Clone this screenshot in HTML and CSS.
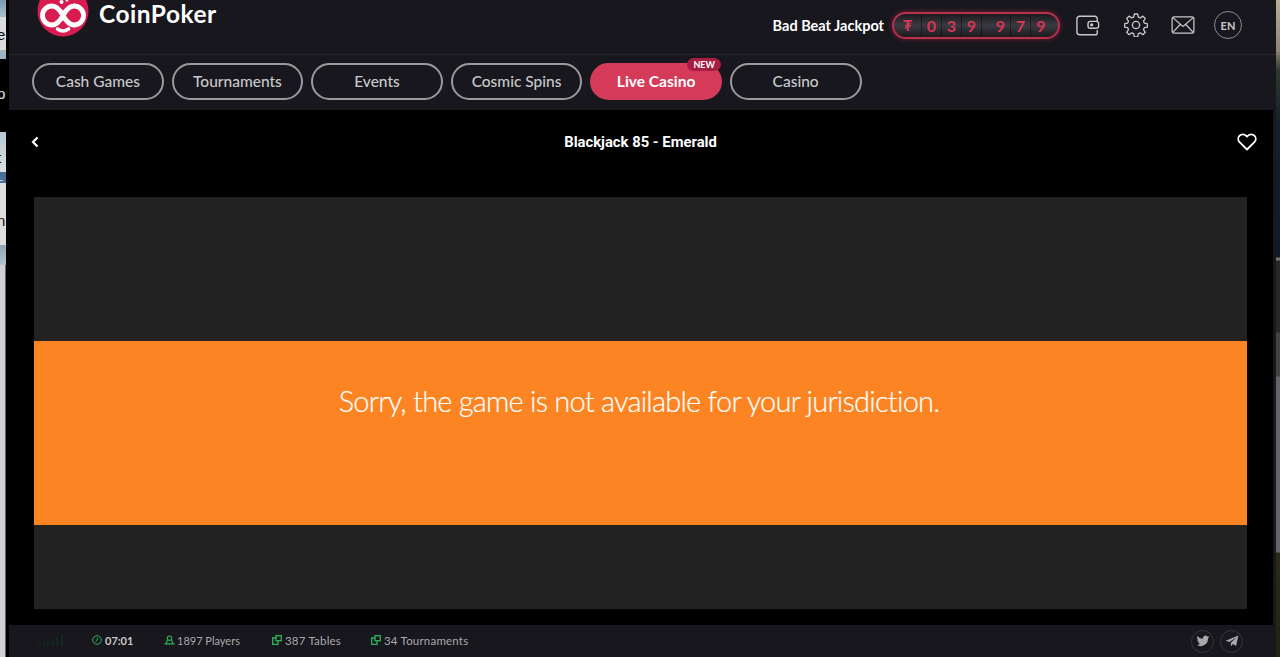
FILE: index.html
```html
<!DOCTYPE html>
<html lang="en">
<head>
    <meta charset="UTF-8">
    <meta name="viewport" content="width=device-width, initial-scale=1.0">
    <title>CoinPoker - Blackjack 85 - Emerald</title>
    <link rel="stylesheet" href="styles.css">
</head>
<body>
    <div class="desk desk-left">
        <div class="desk-tile t1"></div>
        <div class="desk-tile t2">e</div>
        <div class="desk-tile t3"></div>
        <div class="desk-black">p</div>
        <div class="desk-tile t4">t</div>
        <div class="desk-tile t5">L</div>
        <div class="desk-tile t6">n</div>
        <div class="desk-tile t7"></div>
        <div class="desk-tile grow"></div>
    </div>

    <div class="app">
        <header class="topbar">
            <div class="brand">
                <svg class="logo" viewBox="0 0 52 52">
                    <circle cx="26" cy="26" r="25.500" fill="#d81b50"/>
                    <path d="M26 30.500c-3-5.500-6-9.500-11-9.500a9.500 9.500 0 0 0 0 19c5 0 8-4 11-9.500s6-9.500 11-9.500a9.500 9.500 0 0 1 0 19c-5 0-8-4-11-9.500" fill="none" stroke="#fff" stroke-width="4.800"/>
                    <circle cx="24.500" cy="17" r="2" fill="#fff"/>
                    <circle cx="30" cy="15" r="1.500" fill="#fff"/>
                    <path d="M20.500 44c3.500 2.500 7.500 2.500 11 0" fill="none" stroke="#fff" stroke-width="3.600" stroke-linecap="round"/>
                </svg>
                <span class="brand-name">CoinPoker</span>
            </div>
            <div class="top-right">
                <span class="jackpot-label">Bad Beat Jackpot</span>
                <div class="jackpot">
                    <span class="digit cur">₮</span>
                    <span class="digit">0</span>
                    <span class="digit">3</span>
                    <span class="digit">9</span>
                    <span class="digit gap">9</span>
                    <span class="digit">7</span>
                    <span class="digit">9</span>
                </div>
                <svg class="top-icon wallet" viewBox="0 0 26 22" fill="none" stroke="#c9c9cc" stroke-width="1.500">
                    <path d="M23 6V3.500A2.500 2.500 0 0 0 20.500 1H4a3 3 0 0 0-3 3v14a3 3 0 0 0 3 3h17a2 2 0 0 0 2-2v-3"/>
                    <rect x="13" y="6.500" width="11.500" height="7.500" rx="2.500"/>
                    <circle cx="17" cy="10.200" r="1" fill="#c9c9cc"/>
                </svg>
                <svg class="top-icon gear" viewBox="0 0 24 24" fill="none" stroke="#c9c9cc" stroke-width="1.300" stroke-linejoin="round">
                    <circle cx="12" cy="12" r="3.600"/>
                    <path d="M10.300 1h3.400l.6 3.100 2 .8 2.600-1.800 2.400 2.400-1.800 2.600.8 2 3.100.6v3.400l-3.100.6-.8 2 1.800 2.600-2.400 2.400-2.600-1.800-2 .8-.6 3.100h-3.400l-.6-3.100-2-.8-2.600 1.800-2.400-2.400 1.800-2.600-.8-2-3.100-.6v-3.400l3.100-.6.8-2-1.800-2.600 2.400-2.400 2.600 1.800 2-.8z"/>
                </svg>
                <svg class="top-icon mail" viewBox="0 0 25 19" fill="none" stroke="#c9c9cc" stroke-width="1.300">
                    <rect x="1" y="1" width="23" height="17" rx="2"/>
                    <path d="M2 2l10.500 9L23 2M2 17l7.500-8M23 17l-7.500-8"/>
                </svg>
                <span class="lang">EN</span>
            </div>
        </header>

        <nav class="tabs">
            <a class="tab">Cash Games</a>
            <a class="tab">Tournaments</a>
            <a class="tab">Events</a>
            <a class="tab">Cosmic Spins</a>
            <a class="tab active">Live Casino<span class="badge">NEW</span></a>
            <a class="tab">Casino</a>
        </nav>

        <main class="game">
            <div class="game-head">
                <svg class="back" viewBox="0 0 8 12" fill="none" stroke="#fff" stroke-width="2.200"><path d="M6.500 1.500L2 6l4.500 4.500"/></svg>
                <h1>Blackjack 85 - Emerald</h1>
                <svg class="heart" viewBox="0 0 20 18" fill="none" stroke="#fff" stroke-width="1.800" stroke-linejoin="round">
                    <path d="M10 16.500L2.600 9.200a4.600 4.600 0 0 1 0-6.500 4.500 4.500 0 0 1 6.400 0l1 1 1-1a4.500 4.500 0 0 1 6.400 0 4.600 4.600 0 0 1 0 6.500z"/>
                </svg>
            </div>
            <div class="game-panel">
                <div class="notice">Sorry, the game is not available for your jurisdiction.</div>
            </div>
        </main>

        <footer class="statusbar">
            <div class="signal"><i></i><i></i><i></i><i></i><i></i><i></i></div>
            <div class="stat clock">
                <svg viewBox="0 0 10 10" fill="none" stroke="#2fb35c" stroke-width="1"><circle cx="5" cy="5" r="4.300"/><path d="M5.300 2.500v2.700L3.500 6.800"/></svg>
                <b>07:01</b>
            </div>
            <div class="stat players">
                <svg viewBox="0 0 12 10" fill="none" stroke="#2fb35c" stroke-width="1.200"><circle cx="6" cy="3" r="2.400"/><path d="M3.700 5L2.500 8.500M8.300 5l1.200 3.500M.5 9.200h11"/></svg>
                1897 Players
            </div>
            <div class="stat tables">
                <svg viewBox="0 0 10 10" fill="none" stroke="#2fb35c" stroke-width="1.300"><rect x="4" y=".7" width="5.300" height="5"/><path d="M4 3H.7v6.300h5.300V5.700"/></svg>
                387 Tables
            </div>
            <div class="stat tourneys">
                <svg viewBox="0 0 10 10" fill="none" stroke="#2fb35c" stroke-width="1.300"><rect x="4" y=".7" width="5.300" height="5"/><path d="M4 3H.7v6.300h5.300V5.700"/></svg>
                34 Tournaments
            </div>
            <div class="social">
                <span class="social-btn">
                    <svg viewBox="0 0 24 24" fill="#a8a8ab"><path d="M23 4.900c-.8.400-1.700.600-2.600.700.900-.600 1.600-1.400 2-2.500-.9.500-1.800.900-2.900 1.100a4.500 4.500 0 0 0-7.700 4.100C8 8.100 4.700 6.300 2.500 3.600c-1.200 2.100-.6 4.700 1.400 6-.7 0-1.400-.2-2-.6 0 2.200 1.500 4.100 3.600 4.500-.7.200-1.400.2-2 .1.600 1.800 2.200 3.100 4.200 3.100A9 9 0 0 1 1 18.600 12.800 12.800 0 0 0 20.700 7.200c.9-.6 1.700-1.400 2.300-2.300z"/></svg>
                </span>
                <span class="social-btn">
                    <svg viewBox="0 0 24 24" fill="#a8a8ab"><path d="M23 2.500L1 11.500l6.500 2.400L20 5.500 10 15v6l3.600-4 5.400 3.500z"/></svg>
                </span>
            </div>
        </footer>
    </div>

    <div class="desk desk-right"></div>
</body>
</html>
```

FILE: styles.css
```css
html, body {
    height: 100%;
}
body {
    margin: 0;
    display: flex;
    height: 657px;
    overflow: hidden;
    font-family: 'Lato', 'Open Sans', sans-serif;
    background: #000;
    color: #fff;
}

/* bits of the desktop showing either side of the window */
.desk {
    flex: none;
    display: flex;
    flex-direction: column;
    overflow: hidden;
}
.desk-left {
    width: 9px;
    background: #000;
    font-family: 'Liberation Sans', sans-serif;
    font-size: 15px;
    color: #111;
}
.desk-right {
    width: 4px;
    background: linear-gradient(180deg,
        #b9ad97 0, #8d8574 50px, #2f3a2c 70px, #14212c 120px, #0e1a28 257px,
        #77746c 258px, #77746c 260px, #2b2823 261px, #2b2823 332px,
        #45423f 333px, #45423f 376px, #66656a 377px, #66656a 552px,
        #2c2a12 553px, #24230f 657px);
}
.desk-tile {
    width: 6px;
    box-sizing: border-box;
    overflow: hidden;
    text-indent: -3px;
    line-height: 1;
    background: linear-gradient(180deg, #bfd0dc, #dfe4e8);
}
.t1 { height: 17px; background: linear-gradient(180deg, #7b99b0, #a9bfce); }
.t2 { height: 33px; background: #d9dcdc; padding-top: 10px; }
.t3 { height: 9px; background: #9fb2c0; }
.desk-black {
    width: 6px;
    height: 73px;
    box-sizing: border-box;
    overflow: hidden;
    color: #eee;
    text-indent: -3px;
    padding-top: 27px;
    line-height: 1;
    background: #000;
}
.t4 { height: 40px; background: linear-gradient(180deg, #b6c7d3, #dde0e2); padding-top: 18px; }
.t5 { height: 11px; background: #4a6d9a; color: #dfe7ef; font-size: 11px; }
.t6 { height: 62px; background: #dedede; padding-top: 30px; }
.t7 { height: 20px; background: linear-gradient(180deg, #8fa5b4, #b4c4cf); }
.grow {
    flex: 1;
    background: #d0d0d8;
    border-right: 1px solid #666;
}

.app {
    flex: 1;
    min-width: 0;
    display: flex;
    flex-direction: column;
    background: #17171d;
}

.topbar {
    height: 55px;
    flex: none;
    box-sizing: border-box;
    display: flex;
    align-items: center;
    justify-content: space-between;
    border-bottom: 1px solid #26262c;
    padding: 0 34px 4px 28px;
    overflow: hidden;
}
.brand {
    display: flex;
    align-items: flex-start;
    gap: 10px;
    height: 37px;
    align-self: flex-start;
}
.logo {
    width: 52px;
    height: 52px;
    margin-top: -15px;
    flex: none;
}
.brand-name {
    font-size: 24.500px;
    font-weight: 700;
    letter-spacing: 0.500px;
    line-height: 28px;
}
.top-right {
    display: flex;
    align-items: center;
}
.jackpot-label {
    font-size: 14.500px;
    font-weight: 700;
    margin-right: 8px;
}
.jackpot {
    display: flex;
    align-items: center;
    width: 168px;
    height: 27px;
    box-sizing: border-box;
    border: 2px solid #b8304c;
    border-radius: 14px;
    box-shadow: 0 0 5px rgba(216, 40, 80, 0.55);
    background: linear-gradient(180deg, #1a1a1f 0, #3a3a40 50%, #1a1a1f 100%);
    overflow: hidden;
}
.digit {
    width: 20px;
    box-sizing: border-box;
    text-align: center;
    font-size: 16px;
    font-weight: 700;
    line-height: 23px;
    color: #d83655;
    border-right: 1px solid rgba(0, 0, 0, 0.4);
}
.digit.cur {
    width: 28px;
    font-size: 15px;
}
.digit.gap {
    margin-left: 9px;
}
.digit:last-child {
    border-right: 0;
}
.top-icon {
    display: block;
    flex: none;
}
.wallet {
    width: 24px;
    height: 21px;
    margin-left: 16px;
}
.gear {
    width: 24px;
    height: 24px;
    margin-left: 24px;
}
.mail {
    width: 24px;
    height: 18px;
    margin-left: 23px;
}
.lang {
    width: 26px;
    height: 26px;
    margin-left: 19px;
    border: 1.500px solid #8a8a8e;
    border-radius: 50%;
    display: flex;
    align-items: center;
    justify-content: center;
    font-size: 11px;
    font-weight: 700;
    color: #c9c9cc;
}

.tabs {
    height: 55px;
    flex: none;
    box-sizing: border-box;
    display: flex;
    gap: 7.750px;
    padding: 8px 0 0 23px;
}
.tab {
    position: relative;
    width: 131.800px;
    height: 37px;
    box-sizing: border-box;
    border: 2px solid #9a9a9c;
    border-radius: 19px;
    display: flex;
    align-items: center;
    justify-content: center;
    padding-bottom: 2px;
    font-size: 15.500px;
    font-weight: 500;
    color: #c9c9cb;
}
.tab.active {
    background: #d53b58;
    border-color: #d53b58;
    color: #fff;
    font-weight: 700;
}
.badge {
    position: absolute;
    top: -7px;
    right: -1px;
    padding: 0 6px;
    height: 13px;
    line-height: 13px;
    border-radius: 7px;
    background: #a81d43;
    font-size: 9px;
    font-weight: 700;
    color: #fff;
}

.game {
    flex: 1;
    min-height: 0;
    display: flex;
    flex-direction: column;
    background: #000;
    margin-right: 3px;
    padding: 0 26px 16px 25px;
}
.game-head {
    height: 87px;
    flex: none;
    position: relative;
    display: flex;
    align-items: flex-start;
    justify-content: space-between;
}
.game-head h1 {
    position: absolute;
    left: 0;
    right: 0;
    top: 24px;
    margin: 0;
    text-align: center;
    font-family: 'Roboto', sans-serif;
    font-size: 14.800px;
    font-weight: 700;
    line-height: 17px;
}
.back {
    width: 8px;
    height: 12px;
    margin-top: 26px;
    margin-left: -3px;
}
.heart {
    width: 20px;
    height: 18px;
    margin-top: 23px;
    margin-right: -10px;
}
.game-panel {
    flex: 1;
    padding-top: 144px;
    background: #222;
}
.notice {
    height: 184px;
    background: #fc8422;
    display: flex;
    align-items: center;
    justify-content: center;
    padding-bottom: 66px;
    padding-right: 3px;
    box-sizing: border-box;
    font-size: 29px;
    font-weight: 300;
    letter-spacing: -0.780px;
    -webkit-text-stroke: 0.2px #fff;
}

.statusbar {
    height: 32px;
    flex: none;
    box-sizing: border-box;
    display: flex;
    align-items: center;
    padding: 0 33px 2px 29px;
    font-size: 11.500px;
    color: #a9a9ac;
}
.signal {
    display: flex;
    align-items: flex-end;
    gap: 2.500px;
    height: 12px;
    width: 54px;
}
.signal i {
    width: 2px;
    background: #0f2a1a;
}
.signal i:nth-child(1) { height: 2px; }
.signal i:nth-child(2) { height: 3px; }
.signal i:nth-child(3) { height: 5px; }
.signal i:nth-child(4) { height: 7px; }
.signal i:nth-child(5) { height: 9px; }
.signal i:nth-child(6) { height: 11px; }
.stat {
    display: flex;
    align-items: center;
    gap: 3px;
}
.stat svg {
    width: 10px;
    height: 10px;
    display: block;
}
.stat b {
    color: #c9c9cb;
    font-size: 11px;
}
.clock { width: 72px; }
.players { width: 108px; gap: 2px; font-size: 11px; }
.players svg { width: 11px; }
.tables { width: 99px; letter-spacing: 0.200px; }
.tourneys { letter-spacing: 0.200px; }
.social {
    margin-left: auto;
    display: flex;
    gap: 6px;
    margin-top: 2px;
}
.social-btn {
    width: 23px;
    height: 23px;
    box-sizing: border-box;
    border: 1px solid #36363c;
    border-radius: 50%;
    display: flex;
    align-items: center;
    justify-content: center;
}
.social-btn svg {
    width: 14px;
    height: 14px;
}
```
